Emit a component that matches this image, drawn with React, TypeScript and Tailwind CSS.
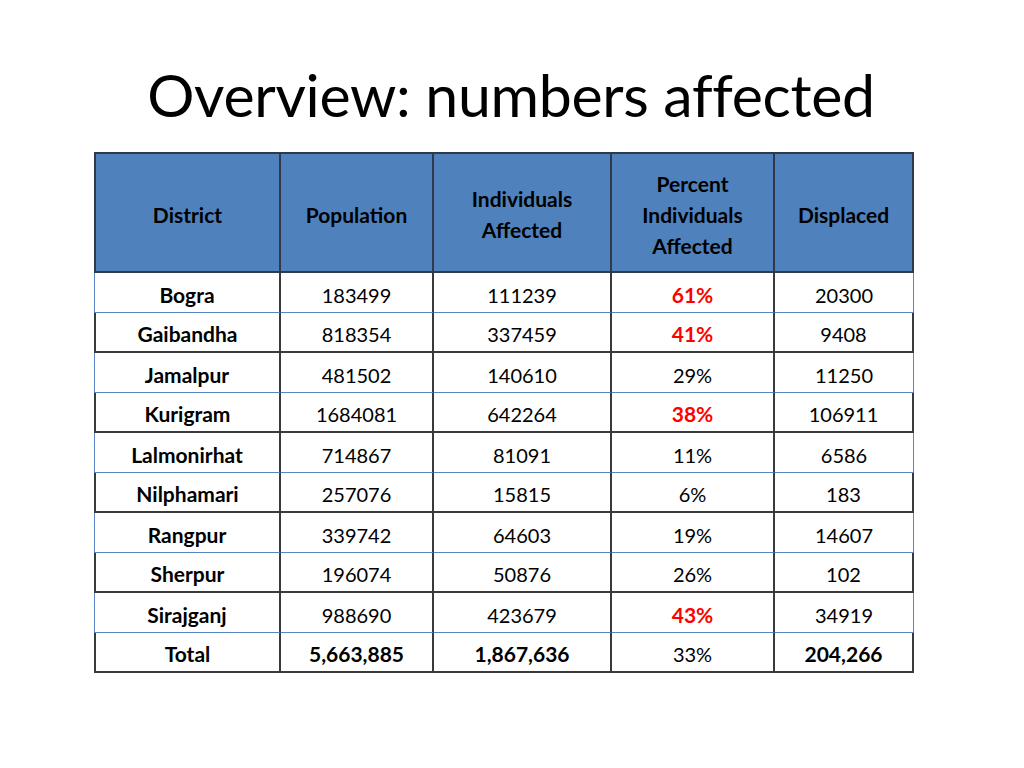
import clsx from "clsx";

type Row = {
  district: string;
  population: string;
  affected: string;
  percent: string;
  displaced: string;
  hot?: boolean;
  total?: boolean;
};

const rows: Row[] = [
  { district: "Bogra", population: "183499", affected: "111239", percent: "61%", displaced: "20300", hot: true },
  { district: "Gaibandha", population: "818354", affected: "337459", percent: "41%", displaced: "9408", hot: true },
  { district: "Jamalpur", population: "481502", affected: "140610", percent: "29%", displaced: "11250" },
  { district: "Kurigram", population: "1684081", affected: "642264", percent: "38%", displaced: "106911", hot: true },
  { district: "Lalmonirhat", population: "714867", affected: "81091", percent: "11%", displaced: "6586" },
  { district: "Nilphamari", population: "257076", affected: "15815", percent: "6%", displaced: "183" },
  { district: "Rangpur", population: "339742", affected: "64603", percent: "19%", displaced: "14607" },
  { district: "Sherpur", population: "196074", affected: "50876", percent: "26%", displaced: "102" },
  { district: "Sirajganj", population: "988690", affected: "423679", percent: "43%", displaced: "34919", hot: true },
  { district: "Total", population: "5,663,885", affected: "1,867,636", percent: "33%", displaced: "204,266", total: true },
];

const widths = ["w-[187px]", "w-[153px]", "w-[178px]", "w-[163px]", "w-[139px]"];

const DataRow = ({ row, index }: { row: Row; index: number }) => {
  const light = index % 2 === 0;
  const bottom = light ? "border-b border-b-[#5b84c4]" : "border-b-2 border-b-[#3a3a3a]";
  const cells = [row.district, row.population, row.affected, row.percent, row.displaced];

  return (
    <div className="flex">
      {cells.map((text, i) => {
        const bold = i === 0 || (row.total && i !== 3) || (i === 3 && row.hot);
        return (
          <div
            key={i}
            className={clsx(
              "h-10 flex items-center justify-center pt-[4px]",
              widths[i],
              bottom,
              i < 4 && "border-r-2 border-r-[#3a3a3a]",
              i === 0 && (light ? "border-l border-l-[#5b84c4]" : "border-l-2 border-l-[#3a3a3a]"),
              i === 4 && (light ? "border-r border-r-[#5b84c4]" : "border-r-2 border-r-[#3a3a3a]"),
              bold ? "font-bold text-[21px]" : "text-[20px]",
              i === 3 && row.hot ? "text-[#ff0000]" : "text-black"
            )}
          >
            {text}
          </div>
        );
      })}
    </div>
  );
};

export default function App() {
  const headers = [["District"], ["Population"], ["Individuals", "Affected"], ["Percent", "Individuals", "Affected"], ["Displaced"]];

  return (
    <div className="w-[1024px] h-[768px] bg-white flex flex-col font-['Lato',sans-serif] text-black">
      <h1 className="mt-[60px] h-[76px] self-center text-[59px] leading-[70px] font-normal tracking-[-0.3px] pr-[2px]">
        Overview: numbers affected
      </h1>
      <div className="mt-[16px] ml-[94px] flex flex-col">
        <div className="flex">
          {headers.map((lines, i) => (
            <div
              key={i}
              className={clsx(
                "h-[121px] bg-[#4f81bd] flex flex-col items-center justify-center pt-[3px] border-y-2 border-y-[#2e3a4a] border-r-2 border-r-[#2e3a4a] font-bold text-[21px] leading-[31px]",
                widths[i],
                i === 0 && "border-l-2 border-l-[#2e3a4a]"
              )}
            >
              {lines.map((l) => (
                <span key={l}>{l}</span>
              ))}
            </div>
          ))}
        </div>
        {rows.map((row, i) => (
          <DataRow key={row.district} row={row} index={i} />
        ))}
      </div>
    </div>
  );
}
